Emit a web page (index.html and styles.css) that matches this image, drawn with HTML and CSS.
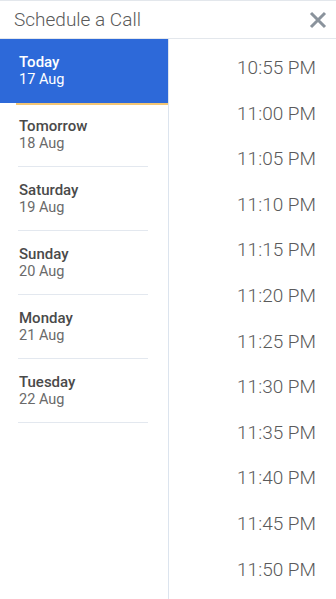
FILE: index.html
```html
<!DOCTYPE html>
<html lang="en">
<head>
    <meta charset="UTF-8">
    <meta name="viewport" content="width=device-width, initial-scale=1.0">
    <title>Schedule a Call</title>
    <link rel="stylesheet" href="styles.css">
</head>
<body>
    <div class="modal">
        <div class="header">
            <h1>Schedule a Call</h1>
            <button class="close" aria-label="Close">
                <svg width="18" height="18" viewBox="0 0 18 18">
                    <path d="M2 2 L16 16 M16 2 L2 16" stroke="#8a939c" stroke-width="3" stroke-linecap="butt" fill="none"/>
                </svg>
            </button>
        </div>
        <div class="picker">
            <ul class="days">
                <li class="day selected"><div class="day-inner"><span class="name">Today</span><span class="date">17 Aug</span></div></li>
                <li class="day"><div class="day-inner"><span class="name">Tomorrow</span><span class="date">18 Aug</span></div></li>
                <li class="day"><div class="day-inner"><span class="name">Saturday</span><span class="date">19 Aug</span></div></li>
                <li class="day"><div class="day-inner"><span class="name">Sunday</span><span class="date">20 Aug</span></div></li>
                <li class="day"><div class="day-inner"><span class="name">Monday</span><span class="date">21 Aug</span></div></li>
                <li class="day"><div class="day-inner"><span class="name">Tuesday</span><span class="date">22 Aug</span></div></li>
            </ul>
            <ul class="times">
                <li>10:55 PM</li>
                <li>11:00 PM</li>
                <li>11:05 PM</li>
                <li>11:10 PM</li>
                <li>11:15 PM</li>
                <li>11:20 PM</li>
                <li>11:25 PM</li>
                <li>11:30 PM</li>
                <li>11:35 PM</li>
                <li>11:40 PM</li>
                <li>11:45 PM</li>
                <li>11:50 PM</li>
            </ul>
        </div>
    </div>
</body>
</html>
```

FILE: styles.css
```css
html, body {
    height: 100%;
    margin: 0;
    padding: 0;
    overflow: hidden;
}

body {
    font-family: Roboto, "Liberation Sans", sans-serif;
    background-color: white;
}

.modal {
    display: flex;
    flex-direction: column;
    height: 100%;
}

.header {
    display: flex;
    align-items: center;
    justify-content: space-between;
    height: 37px;
    border-top: 1px solid #e3e7ec;
    border-bottom: 1px solid #e3e7ec;
    padding: 0 9px 0 14px;
}

h1 {
    margin: 0;
    font-size: 19px;
    font-weight: 300;
    color: #5a5a5a;
}

.close {
    background: none;
    border: none;
    padding: 0;
    display: flex;
    cursor: pointer;
}

.picker {
    display: flex;
    flex: 1;
}

ul {
    list-style: none;
    margin: 0;
    padding: 0;
}

.days {
    width: 168px;
    border-right: 1px solid #dce4ee;
}

.day {
    position: relative;
    padding: 0 20px 0 18px;
    cursor: pointer;
}

.day-inner {
    display: flex;
    flex-direction: column;
    padding: 15px 0 14px 1px;
    border-bottom: 1px solid #e3e8ef;
    line-height: 17px;
}

.name {
    font-size: 15px;
    font-weight: 500;
    color: #4a4a4a;
}

.date {
    font-size: 14.5px;
    color: #6a6a6a;
}

.selected {
    background-color: #2d69d9;
}

.selected .day-inner {
    border-bottom-color: #2d69d9;
}

.selected .name,
.selected .date {
    color: white;
}

.selected::after {
    content: "";
    position: absolute;
    left: 16px;
    right: 0;
    bottom: -2px;
    height: 2px;
    background-color: #f4c673;
}

.times {
    flex: 1;
    padding-top: 6px;
}

.times li {
    height: 45.6px;
    line-height: 45.6px;
    text-align: right;
    padding-right: 20px;
    font-size: 19px;
    font-weight: 300;
    color: #5a5a5a;
}
```
